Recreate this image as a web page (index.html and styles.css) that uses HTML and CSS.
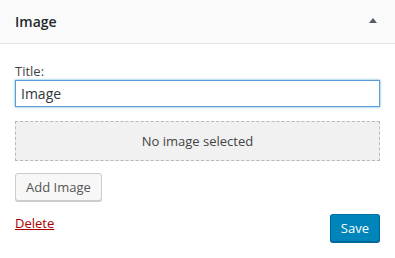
FILE: index.html
```html
<!DOCTYPE html>
<html lang="en">
<head>
  <meta charset="UTF-8" />
  <title>Image Widget</title>
  <link rel="stylesheet" href="styles.css">
</head>
<body>
  <div class="widget">
    <!-- Widget Title Bar -->
    <div class="widget-top">
      <h3>Image</h3>
      <span class="toggle-arrow"></span>
    </div>

    <!-- Widget Form -->
    <div class="widget-inside">
      <label for="widgetTitle">Title:</label>
      <input type="text" id="widgetTitle" class="title-input" value="Image" />

      <div class="placeholder">No image selected</div>

      <button class="button">Add Image</button>

      <div class="widget-actions">
        <a href="#" class="delete-link">Delete</a>
        <button class="button button-primary">Save</button>
      </div>
    </div>
  </div>
</body>
</html>
```

FILE: styles.css
```css
/* —— Reset & Base —— */
* { box-sizing: border-box; margin: 0; padding: 0; }
body { font-family: "Open Sans", sans-serif; font-size: 13px; color: #444; background: #fff; }

/* —— Title Bar —— */
.widget-top {
  height: 44px;
  display: flex;
  align-items: center;
  justify-content: space-between;
  padding: 0 18px 0 15px;
  background: #fafafa;
  border-bottom: 1px solid #e5e5e5;
}
.widget-top h3 { font-size: 14px; font-weight: 600; color: #23282d; }
.toggle-arrow {
  width: 0;
  height: 0;
  border-left: 4px solid transparent;
  border-right: 4px solid transparent;
  border-bottom: 5px solid #555d66;
  margin-top: -2px;
}

/* —— Form —— */
.widget-inside { padding: 18px 15px 15px; }
label { display: block; line-height: 18px; color: #444; }
.title-input {
  display: block;
  width: 100%;
  height: 27px;
  padding: 0 5px;
  font: 14px "Open Sans", sans-serif;
  color: #32373c;
  border: 1px solid #5b9dd9;
  box-shadow: 0 0 2px rgba(30, 140, 190, 0.8);
  outline: none;
}

.placeholder {
  margin-top: 14px;
  height: 40px;
  display: flex;
  align-items: center;
  justify-content: center;
  background: #f1f1f1;
  border: 1px dashed #b4b9be;
  color: #444;
}

/* —— Buttons —— */
.button {
  display: inline-block;
  margin-top: 12px;
  height: 28px;
  padding: 0 10px 1px;
  font: 13px "Open Sans", sans-serif;
  color: #555;
  background: #f7f7f7;
  border: 1px solid #ccc;
  border-radius: 3px;
  box-shadow: 0 1px 0 #ccc;
  cursor: pointer;
}
.button-primary {
  margin-top: 0;
  color: #fff;
  background: #0085ba;
  border-color: #0073aa #006799 #006799;
  box-shadow: 0 1px 0 #006799;
}

.widget-actions {
  display: flex;
  justify-content: space-between;
  align-items: flex-start;
  margin-top: 13px;
}
.delete-link { color: #a00; line-height: 18px; }
```
